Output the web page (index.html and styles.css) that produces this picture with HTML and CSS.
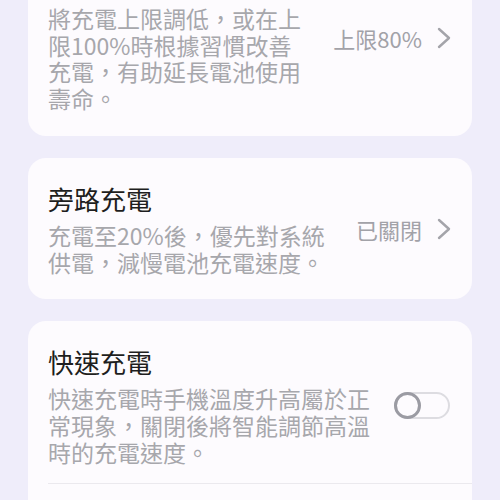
FILE: index.html
```html
<!DOCTYPE html>
<html lang="zh-Hant">
<head>
  <meta charset="UTF-8">
  <meta name="viewport" content="width=device-width, initial-scale=1.0">
  <title>電池設定</title>
  <link rel="stylesheet" href="styles.css">
</head>
<body>
  <div class="settings-list">
    <!-- 充電保護 -->
    <div class="card">
      <div class="row">
        <div class="row-text">
          <div class="row-title">充電保護</div>
          <div class="row-desc">將充電上限調低，或在上限100%時根據習慣改善充電，有助延長電池使用壽命。</div>
        </div>
        <div class="row-value">
          <span>上限80%</span>
          <svg class="chevron" width="16" height="22" viewBox="0 0 16 22">
            <polyline points="3,2 13,11 3,20" fill="none" stroke="#a4a4aa" stroke-width="2.4" stroke-linecap="round" stroke-linejoin="round"/>
          </svg>
        </div>
      </div>
    </div>

    <!-- 旁路充電 -->
    <div class="card">
      <div class="row">
        <div class="row-text">
          <div class="row-title">旁路充電</div>
          <div class="row-desc">充電至20%後，優先對系統供電，減慢電池充電速度。</div>
        </div>
        <div class="row-value">
          <span>已關閉</span>
          <svg class="chevron" width="16" height="22" viewBox="0 0 16 22">
            <polyline points="3,2 13,11 3,20" fill="none" stroke="#a4a4aa" stroke-width="2.4" stroke-linecap="round" stroke-linejoin="round"/>
          </svg>
        </div>
      </div>
    </div>

    <!-- 快速充電 -->
    <div class="card card-open">
      <div class="row row-divided">
        <div class="row-text">
          <div class="row-title">快速充電</div>
          <div class="row-desc">快速充電時手機溫度升高屬於正常現象，關閉後將智能調節高溫時的充電速度。</div>
        </div>
        <div class="toggle">
          <div class="toggle-knob"></div>
        </div>
      </div>
      <div class="row-rest"></div>
    </div>
  </div>
</body>
</html>
```

FILE: styles.css
```css
html, body {
  margin: 0;
  padding: 0;
  background: #efedfa;
  font-family: "Noto Sans CJK TC", "Noto Sans", sans-serif;
  height: 500px;
  overflow: hidden;
}

/* scrolled: first card's top is above the screen */
.settings-list {
  margin-top: -59px;
  padding: 0 28px;
  display: flex;
  flex-direction: column;
  gap: 22px;
}

.card {
  background: #fdfbfe;
  border-radius: 18px;
}

.card-open {
  border-bottom-left-radius: 0;
  border-bottom-right-radius: 0;
}

.row {
  display: flex;
  align-items: center;
  padding: 24px 20px 24px 20px;
}

.row-text {
  flex: 1;
  min-width: 0;
  margin-right: 20px;
}

.row-title {
  font-size: 26px;
  line-height: 34px;
  color: #1e1e20;
  margin-bottom: 6px;
}

.row-desc {
  font-size: 23px;
  line-height: 26.7px;
  color: #a7a7ac;
}

.row-value {
  display: flex;
  align-items: center;
  gap: 14px;
  font-size: 22px;
  color: #a2a2a8;
  white-space: nowrap;
}

.chevron {
  display: block;
}

.row-divided {
  padding-bottom: 18px;
  padding-right: 22px;
  border-bottom: 1px solid #ebe9ee;
  margin-left: 20px;
  padding-left: 0;
}

.row-rest {
  height: 40px;
}

.toggle {
  width: 52px;
  height: 23px;
  border: 2px solid #dddce1;
  border-radius: 14px;
  display: flex;
  align-items: center;
  background: #fdfbfe;
}

.toggle-knob {
  width: 21px;
  height: 21px;
  border: 3px solid #9b9ba3;
  border-radius: 50%;
  margin-left: -2px;
  background: #fdfbfe;
}
```
